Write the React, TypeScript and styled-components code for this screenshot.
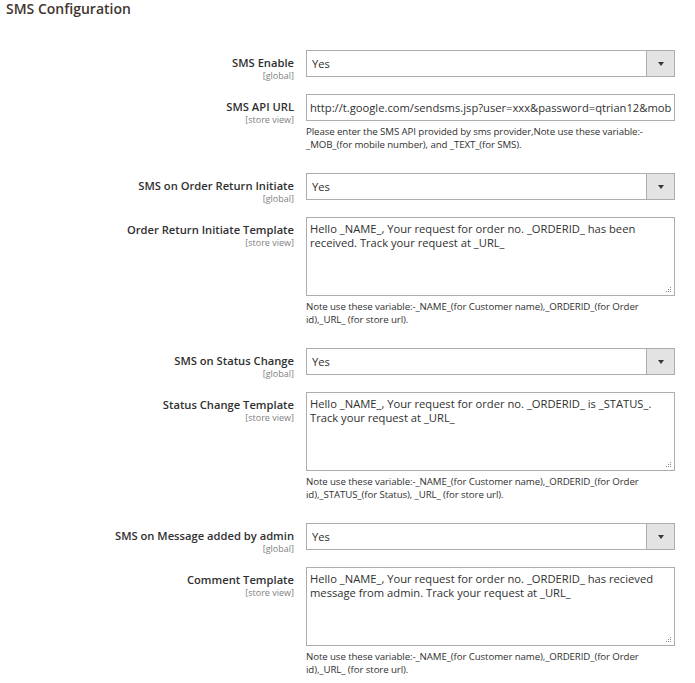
import React from 'react'
import styled, { createGlobalStyle } from 'styled-components'

const GlobalStyle = createGlobalStyle`
    body {
        margin: 0;
        background: #ffffff;
        font-family: "Open Sans", "Liberation Sans", sans-serif;
        color: #303030;
    }
`

const Page = styled.div`
    width: 695px;
`

const Title = styled.h2`
    margin: 0 0 0 6px;
    font-size: 14px;
    line-height: 17px;
    font-weight: 600;
    color: #41362f;
`

const Fieldset = styled.div`
    padding-top: 33px;
`

const Row = styled.div<{ $gap: number }>`
    display: grid;
    grid-template-columns: 294px 369px;
    column-gap: 12px;
    align-items: start;
    margin-bottom: ${p => p.$gap}px;
`

const LabelCol = styled.div`
    text-align: right;
    padding-top: 6px;
    margin-bottom: -4px;
`

const Label = styled.div`
    font-size: 11.2px;
    line-height: 14px;
    font-weight: 600;
    color: #303030;
`

const Scope = styled.div`
    font-size: 9px;
    line-height: 11px;
    color: #808080;
`

const SelectBox = styled.div`
    display: flex;
    height: 27px;
    box-sizing: border-box;
    border: 1px solid #adadad;
    background: #ffffff;
`

const SelectValue = styled.div`
    flex: 1;
    padding-left: 5px;
    font-size: 11.2px;
    line-height: 25px;
    color: #303030;
`

const ArrowBtn = styled.div`
    width: 27px;
    background: #e3e3e3;
    border-left: 1px solid #adadad;
    display: flex;
    align-items: center;
    justify-content: center;

    &:after {
        content: "";
        border-left: 3px solid transparent;
        border-right: 3px solid transparent;
        border-top: 4px solid #41362f;
    }
`

const TextInput = styled.div`
    height: 27px;
    box-sizing: border-box;
    border: 1px solid #adadad;
    padding-left: 3px;
    font-size: 11.2px;
    line-height: 25px;
    white-space: nowrap;
    color: #303030;
`

const TextArea = styled.div`
    position: relative;
    height: 79px;
    box-sizing: border-box;
    border: 1px solid #adadad;
    padding: 4px 3px;
    font-size: 11.2px;
    line-height: 14px;
    color: #303030;
`

const Grip = styled.svg`
    position: absolute;
    right: 2px;
    bottom: 2px;
`

const Note = styled.div`
    margin-top: 4px;
    font-size: 9.7px;
    line-height: 13px;
    color: #303030;
    letter-spacing: -0.1px;
`

type Field = {
    label: string
    scope: string
    kind: 'select' | 'input' | 'textarea'
    value: string
    note?: string
}

const fields: Field[] = [
    { label: 'SMS Enable', scope: '[global]', kind: 'select', value: 'Yes' },
    {
        label: 'SMS API URL', scope: '[store view]', kind: 'input',
        value: 'http://t.google.com/sendsms.jsp?user=xxx&password=qtrian12&mob',
        note: 'Please enter the SMS API provided by sms provider,Note use these variable:- _MOB_(for mobile number), and _TEXT_(for SMS).'
    },
    { label: 'SMS on Order Return Initiate', scope: '[global]', kind: 'select', value: 'Yes' },
    {
        label: 'Order Return Initiate Template', scope: '[store view]', kind: 'textarea',
        value: 'Hello _NAME_, Your request for order no. _ORDERID_ has been received. Track your request at _URL_',
        note: 'Note use these variable:-_NAME_(for Customer name),_ORDERID_(for Order id),_URL_ (for store url).'
    },
    { label: 'SMS on Status Change', scope: '[global]', kind: 'select', value: 'Yes' },
    {
        label: 'Status Change Template', scope: '[store view]', kind: 'textarea',
        value: 'Hello _NAME_, Your request for order no. _ORDERID_ is _STATUS_. Track your request at _URL_',
        note: 'Note use these variable:-_NAME_(for Customer name),_ORDERID_(for Order id),_STATUS_(for Status), _URL_ (for store url).'
    },
    { label: 'SMS on Message added by admin', scope: '[global]', kind: 'select', value: 'Yes' },
    {
        label: 'Comment Template', scope: '[store view]', kind: 'textarea',
        value: 'Hello _NAME_, Your request for order no. _ORDERID_ has recieved message from admin. Track your request at _URL_',
        note: 'Note use these variable:-_NAME_(for Customer name),_ORDERID_(for Order id),_URL_ (for store url).'
    },
]

function ResizeGrip() {
    const dots = [[8, 2], [6, 4], [8, 4], [4, 6], [6, 6], [8, 6]]
    return (
        <Grip width="10" height="8" viewBox="0 0 10 8">
            {dots.map(([x, y], i) => <rect key={i} x={x} y={y} width="1" height="1" fill="#8a8a8a" />)}
        </Grip>
    )
}

function Control({ field }: { field: Field }) {
    if (field.kind === 'select') {
        return (
            <SelectBox>
                <SelectValue>{field.value}</SelectValue>
                <ArrowBtn />
            </SelectBox>
        )
    }
    if (field.kind === 'input') return <TextInput>{field.value}</TextInput>
    return (
        <TextArea>
            {field.value}
            <ResizeGrip />
        </TextArea>
    )
}

export default function App() {
    return (
        <>
            <GlobalStyle />
            <Page>
                <Title>SMS Configuration</Title>
                <Fieldset>
                    {fields.map(f => (
                        <Row key={f.label} $gap={f.note ? 22 : 17}>
                            <LabelCol>
                                <Label>{f.label}</Label>
                                <Scope>{f.scope}</Scope>
                            </LabelCol>
                            <div>
                                <Control field={f} />
                                {f.note && <Note>{f.note}</Note>}
                            </div>
                        </Row>
                    ))}
                </Fieldset>
            </Page>
        </>
    )
}
